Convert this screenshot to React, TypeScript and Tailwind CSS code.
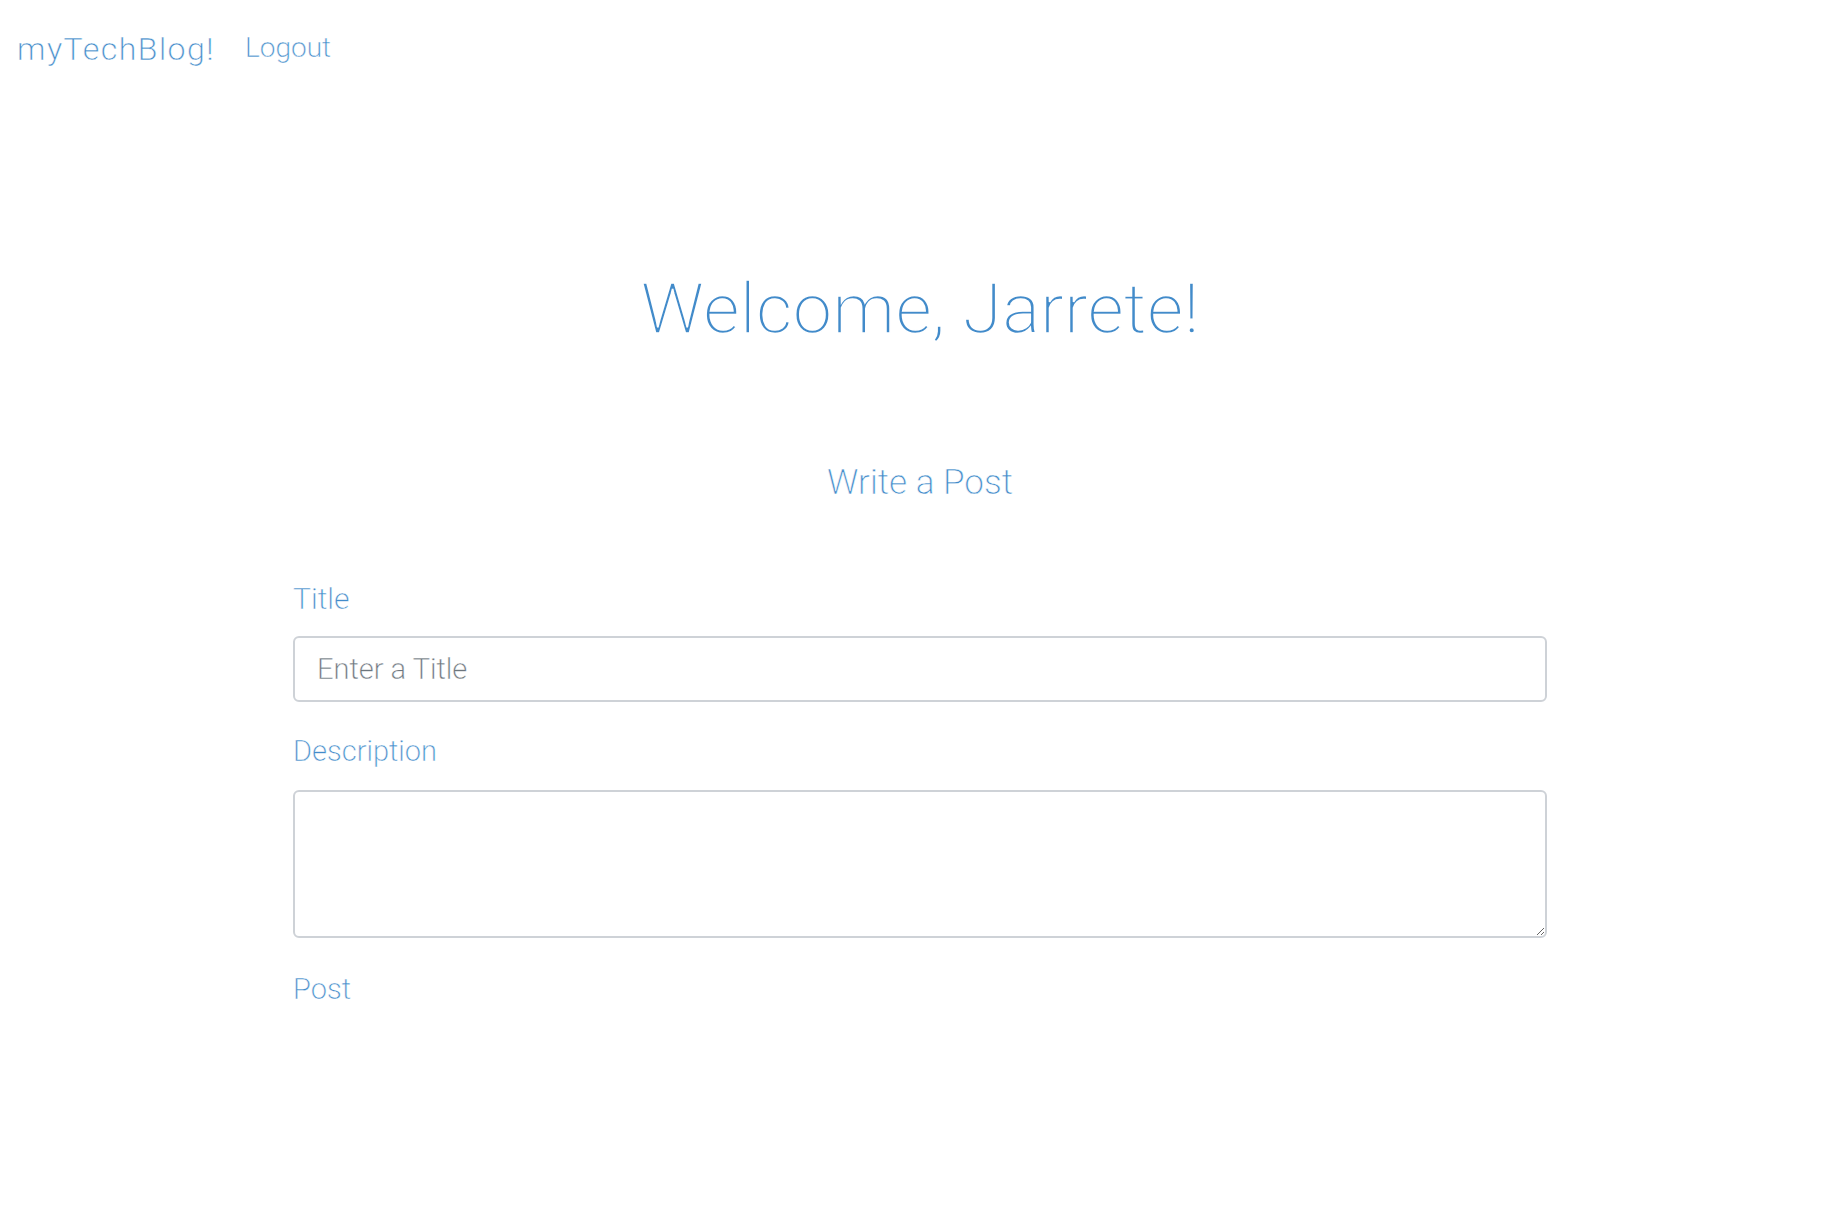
const App = () => {
  return (
    <div className="min-h-screen bg-white font-['Roboto_Light','Roboto',sans-serif] font-light text-[#428bca]">
      <nav className="flex items-start h-[66px] pl-[17px] pt-[33px] gap-[30px] [-webkit-text-stroke:0.4px_white]">
        <a href="#" className="text-[32px] leading-none tracking-[1.5px]">
          myTechBlog!
        </a>
        <a href="#" className="mt-[1px] text-[28px] leading-none">
          Logout
        </a>
      </nav>

      <div className="ml-[293px] w-[1254px]">
        <h1 className="mt-[207px] text-center text-[71px] leading-none [-webkit-text-stroke:1.6px_white]">
          Welcome, Jarrete!
        </h1>
        <h3 className="mt-[121px] text-center text-[35px] leading-none [-webkit-text-stroke:0.5px_white]">
          Write a Post
        </h3>

        <form className="flex flex-col [-webkit-text-stroke:0.4px_white]">
          <label className="mt-[84px] text-[30px] leading-none">Title</label>
          <input
            type="text"
            placeholder="Enter a Title"
            className="mt-[22px] h-[66px] w-full rounded-[6px] border-2 border-[#ced2d7] px-[22px] text-[29px] leading-none text-[#495057] placeholder:text-[#6c757d] outline-none [-webkit-text-stroke:0.3px_white]"
          />

          <label className="mt-[35px] text-[29px] leading-none">Description</label>
          <textarea className="mt-[24px] h-[148px] w-full rounded-[6px] border-2 border-[#ced2d7] px-[22px] py-[10px] text-[29px] text-[#495057] outline-none" />

          <label className="mt-[37px] text-[29px] leading-none">Post</label>
        </form>
      </div>
    </div>
  );
};

export default App;
